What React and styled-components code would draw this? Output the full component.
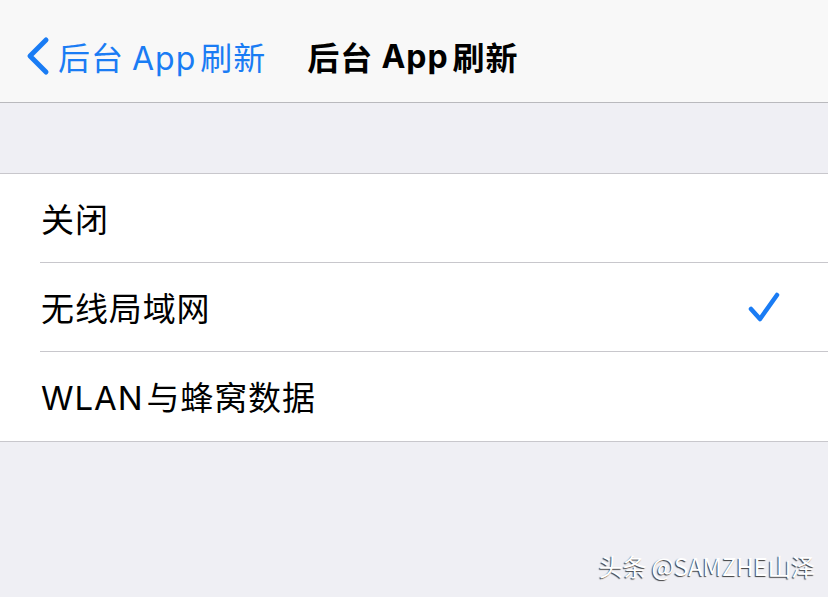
import React from "react";
import styled, { createGlobalStyle } from "styled-components";

const Global = createGlobalStyle`
  html, body { margin: 0; padding: 0; }
  body {
    background: #efeff4;
    font-family: Inter, "Noto Sans CJK SC", sans-serif;
    -webkit-font-smoothing: antialiased;
  }
`;

const Screen = styled.div`
  position: relative;
  width: 828px;
  height: 597px;
  background: #efeff4;
  overflow: hidden;
  display: flex;
  flex-direction: column;
`;

const NavBar = styled.header`
  position: relative;
  height: 103px;
  background: #f8f8f8;
  border-bottom: 1px solid #b9b9bd;
  display: flex;
  align-items: center;
  padding-top: 10px;
  box-sizing: border-box;
`;

const BackButton = styled.div`
  display: flex;
  align-items: center;
  gap: 7px;
  padding-left: 25px;
  color: #1a7cf4;
  font-size: 32px;
  letter-spacing: 1px;
`;

const Title = styled.div`
  position: absolute;
  left: 0;
  right: 0;
  top: 10px;
  bottom: 0;
  display: flex;
  align-items: center;
  justify-content: center;
  padding-right: 2px;
  font-size: 32px;
  font-weight: 700;
  letter-spacing: 1px;
  color: #000;
  pointer-events: none;
`;

const Gap = styled.span`
  display: inline-block;
  width: ${(p) => p.$w}px;
`;

const Spacer = styled.div`
  height: 70px;
`;

const Group = styled.section`
  background: #fff;
  border-top: 1px solid #c8c7cc;
  border-bottom: 1px solid #c8c7cc;
`;

const Row = styled.div`
  height: 89px;
  display: flex;
  align-items: center;
  justify-content: space-between;
  padding: 0 46px 0 41px;
  position: relative;
  font-size: 33px;
  letter-spacing: 0.9px;
  color: #000;
  &::after {
    content: "";
    display: ${(p) => (p.$last ? "none" : "block")};
    position: absolute;
    left: 40px;
    right: 0;
    bottom: 0;
    height: 1px;
    background: #c8c7cc;
  }
`;

const Label = styled.span`
  padding-bottom: 2px;
`;

const Watermark = styled.div`
  position: absolute;
  right: 13px;
  bottom: 14px;
  font-size: 24px;
  color: #fff;
  font-family: "Noto Sans CJK SC", sans-serif;
  text-shadow: -1px 1px 1px rgba(0, 0, 0, 0.75);
  letter-spacing: -0.2px;
`;

const Chevron = () => (
  <svg width="26" height="40" viewBox="0 0 26 40">
    <path d="M21 4 L5 20 L21 36" fill="none" stroke="#1a7cf4" strokeWidth="5" strokeLinecap="round" strokeLinejoin="round" />
  </svg>
);

const Check = () => (
  <svg width="34" height="32" viewBox="0 0 34 32">
    <path d="M3 17 L12 27 L29 3" fill="none" stroke="#1a7cf4" strokeWidth="4.5" strokeLinecap="round" strokeLinejoin="round" />
  </svg>
);

const options = [
  { label: "关闭", checked: false },
  { label: "无线局域网", checked: true },
  { label: ["WLAN", "与蜂窝数据"], checked: false },
];

export default function App() {
  return (
    <>
      <Global />
      <Screen>
        <NavBar>
          <BackButton>
            <Chevron />
            <span>后台<Gap $w={8} />App<Gap $w={4} />刷新</span>
          </BackButton>
          <Title>后台<Gap $w={8} />App<Gap $w={4} />刷新</Title>
        </NavBar>
        <Spacer />
        <Group>
          {options.map((o, i) => (
            <Row key={i} $last={i === options.length - 1}>
              <Label>
                {Array.isArray(o.label) ? (
                  <>
                    {o.label[0]}
                    <Gap $w={3} />
                    {o.label[1]}
                  </>
                ) : (
                  o.label
                )}
              </Label>
              {o.checked && <Check />}
            </Row>
          ))}
        </Group>
        <Watermark>头条 @SAMZHE山泽</Watermark>
      </Screen>
    </>
  );
}
